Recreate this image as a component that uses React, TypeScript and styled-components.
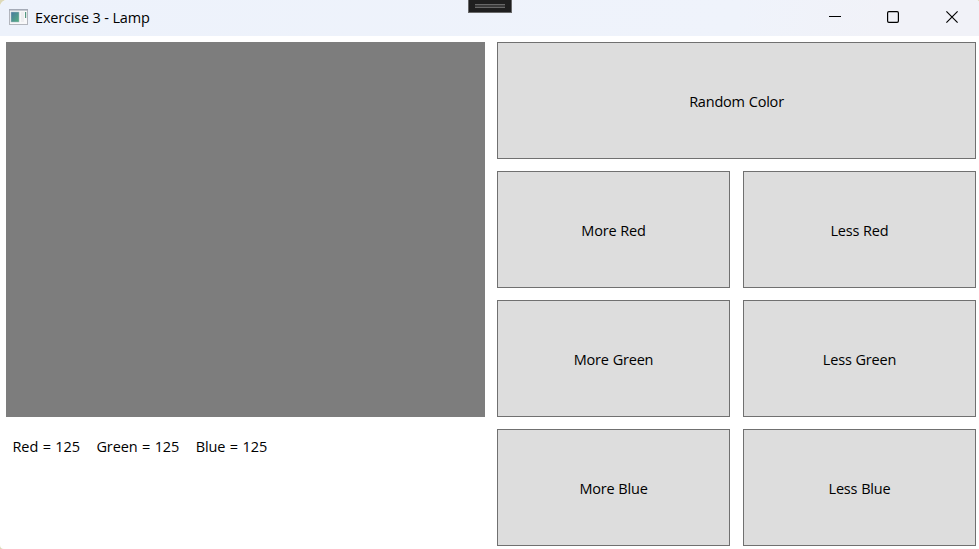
import React, { useState } from "react";
import styled, { createGlobalStyle } from "styled-components";

const GlobalStyle = createGlobalStyle`
  body {
    margin: 0;
    background: #ddd9b8;
    font-family: "Segoe UI", "Open Sans", "Noto Sans", sans-serif;
    font-size: 14.5px;
    color: #000;
    overflow: hidden;
  }
`;

const Window = styled.div`
  position: relative;
  display: flex;
  flex-direction: column;
  width: 979px;
  height: 549px;
  background: #fff;
  border-radius: 7px 3px 0 4px;
  overflow: hidden;
`;

const TitleBar = styled.header`
  display: flex;
  align-items: center;
  height: 36px;
  flex: none;
  background: linear-gradient(100deg, #edf2fb 0%, #eff3fb 75%, #f1f2f8 90%);
`;

const AppIcon = styled.svg`
  margin: 0 7px 3px 9px;
  display: block;
`;

const Title = styled.span`
  flex: 1;
  line-height: 20px;
  letter-spacing: -0.17px;
`;

const Caption = styled.button<{ $width?: number }>`
  display: flex;
  align-items: center;
  justify-content: center;
  width: ${(p) => p.$width ?? 58}px;
  height: 36px;
  padding: 0 0 2px;
  border: 0;
  background: none;
`;

const CaptionGroup = styled.div`
  display: flex;

  & > :last-child {
    margin-left: 3px;
  }
`;

const DebugHandle = styled.div`
  position: absolute;
  left: 468px;
  top: 0;
  box-sizing: border-box;
  width: 44px;
  height: 13px;
  border: 1px solid #686868;
  border-top: 0;
  background: #1f1f1f;
  padding: 4px 6px;
`;

const Grip = styled.div`
  box-sizing: border-box;
  height: 4px;
  border: solid #686868;
  border-width: 1px 0;
  background: #3a3a3a;
`;

const Content = styled.main`
  display: grid;
  grid-template-columns: 479px 479px;
  column-gap: 12px;
  padding: 6px 3px 3px 6px;
`;

const LampPanel = styled.section`
  display: flex;
  flex-direction: column;
`;

const Lamp = styled.div`
  height: 375px;
`;

const Readout = styled.div`
  display: flex;
  gap: 16.5px;
  padding: 20px 6.5px;
  line-height: 20px;
  letter-spacing: -0.1px;
  word-spacing: 0.8px;
`;

const Controls = styled.section`
  display: grid;
  grid-template-columns: 233px 233px;
  grid-auto-rows: 117px;
  gap: 12px 13px;
`;

const ControlButton = styled.button<{ $wide?: boolean }>`
  grid-column: ${(p) => (p.$wide ? "span 2" : "auto")};
  padding: 2px 0 0;
  border: 1px solid #707070;
  border-radius: 0;
  background: #ddd;
  color: #000;
  font: inherit;
  line-height: 20px;
  letter-spacing: -0.2px;
  word-spacing: 0.3px;
`;

type Channel = "Red" | "Green" | "Blue";
const channels: Channel[] = ["Red", "Green", "Blue"];

export default function App() {
  const [color, setColor] = useState<Record<Channel, number>>({ Red: 125, Green: 125, Blue: 125 });
  const step = (c: Channel, d: number) =>
    setColor((v) => ({ ...v, [c]: Math.max(0, Math.min(255, v[c] + d)) }));
  const randomize = () => {
    const r = () => Math.floor(Math.random() * 256);
    setColor({ Red: r(), Green: r(), Blue: r() });
  };

  return (
    <>
      <GlobalStyle />
      <Window>
        <TitleBar>
          <AppIcon width="19" height="16" viewBox="0 0 19 16">
            <defs>
              <linearGradient id="pane" x1="0" y1="0" x2="1" y2="1">
                <stop offset="0" stopColor="#4778a0" />
                <stop offset="1" stopColor="#55b080" />
              </linearGradient>
            </defs>
            <rect x="0.5" y="0.5" width="18" height="15" fill="#f8f8f9" stroke="#b3b6bd" />
            <rect x="0" y="0" width="19" height="1.6" fill="#a5abb7" />
            <rect x="2" y="3" width="8" height="10" fill="url(#pane)" stroke="#a9bdc5" strokeWidth="0.5" />
            <rect x="12" y="3" width="3" height="10" fill="#eeeef0" />
            <rect x="16" y="3" width="1.2" height="6" fill="#559780" />
          </AppIcon>
          <Title>Exercise 3 - Lamp</Title>
          <CaptionGroup>
            <Caption aria-label="Minimize">
              <svg width="12" height="12"><path d="M0 5.5H12" stroke="#000" /></svg>
            </Caption>
            <Caption aria-label="Maximize">
              <svg width="12" height="12"><rect x="0.6" y="0.6" width="10.8" height="10.8" rx="1.3" fill="none" stroke="#000" strokeWidth="1.2" /></svg>
            </Caption>
            <Caption $width={54} aria-label="Close">
              <svg width="12" height="12"><path d="M0.4 0.4L11.6 11.6M11.6 0.4L0.4 11.6" stroke="#000" strokeWidth="1.15" /></svg>
            </Caption>
          </CaptionGroup>
        </TitleBar>
        <DebugHandle><Grip /></DebugHandle>
        <Content>
          <LampPanel>
            <Lamp style={{ background: `rgb(${color.Red}, ${color.Green}, ${color.Blue})` }} />
            <Readout>
              {channels.map((c) => <span key={c}>{c} = {color[c]}</span>)}
            </Readout>
          </LampPanel>
          <Controls>
            <ControlButton $wide onClick={randomize}>Random Color</ControlButton>
            {channels.map((c) => (
              <React.Fragment key={c}>
                <ControlButton onClick={() => step(c, 10)}>More {c}</ControlButton>
                <ControlButton onClick={() => step(c, -10)}>Less {c}</ControlButton>
              </React.Fragment>
            ))}
          </Controls>
        </Content>
      </Window>
    </>
  );
}
